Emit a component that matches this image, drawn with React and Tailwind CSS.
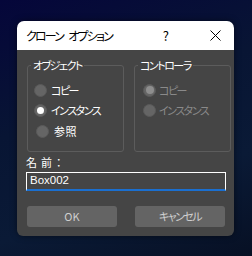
import React from "react";

const font = { fontFamily: '"Noto Sans CJK JP", "Noto Sans", sans-serif' };

function Radio({ label, checked, disabled, className = "", gap = "ml-[4px]", tight = true }) {
  return (
    <div className={"flex h-[20px] items-center " + className}>
      <span className="flex h-[13px] w-[13px] items-center justify-center rounded-full border border-[#5a5a5a] bg-[#656565]">
        {checked && (
          <span
            className={
              "rounded-full " +
              (disabled ? "h-[8px] w-[8px] bg-[#8e8e8e]" : "h-[7px] w-[7px] bg-white")
            }
          />
        )}
      </span>
      <span
        className={
          gap +
          " text-[11px] leading-none " +
          (tight ? "tracking-[-1.5px] " : "tracking-[0.5px] ") +
          (disabled ? "text-[#8a8a8a]" : "text-white")
        }
      >
        {label}
      </span>
    </div>
  );
}

export default function App() {
  return (
    <div
      className="h-[256px] w-[252px] overflow-hidden bg-[linear-gradient(160deg,#05063a_0%,#081534_40%,#0a1a36_70%,#071024_100%)] pl-[17px] pt-[21px] [font-feature-settings:'palt']"
      style={font}
    >
      <div className="flex h-[215px] w-[217px] flex-col rounded-[7px] shadow-[0_0_6px_rgba(0,0,0,0.5)]">
        {/* TITLE BAR */}
        <div className="flex h-[29px] items-center rounded-t-[7px] bg-white pl-[9px] pr-[12px]">
          <span className="text-[12px] tracking-[-1.8px] text-black">クローン</span>
          <span className="ml-[5px] text-[12px] tracking-[-1.8px] text-black">オプション</span>
          <span className="ml-auto mr-[41px] text-[13px] text-black">?</span>
          <svg width="11" height="11" viewBox="0 0 11 11" className="mr-[1px]">
            <path d="M0.5 0.5L10.5 10.5M10.5 0.5L0.5 10.5" stroke="#000" strokeWidth="1" />
          </svg>
        </div>

        {/* BODY */}
        <div className="flex flex-1 flex-col rounded-b-[6px] bg-[#454545] pl-[9px] pt-[8px]">
          <div className="flex gap-[10px] pl-[1px]">
            <fieldset className="h-[94px] w-[97px] rounded-[3px] border border-[#5c5c5c] px-[3px]">
              <legend className="px-[2px] text-[11px] leading-[14px] tracking-[-1.5px] text-white">オブジェクト</legend>
              <div className="flex flex-col pl-[3px] pt-[8px]">
                <Radio label="コピー" />
                <Radio label="インスタンス" checked />
                <Radio label="参照" className="ml-[2px] mt-[1px]" gap="ml-[5px]" tight={false} />
              </div>
            </fieldset>
            <fieldset className="h-[94px] w-[97px] rounded-[3px] border border-[#5c5c5c] px-[3px]">
              <legend className="px-[2px] text-[11px] leading-[14px] tracking-[-1.5px] text-white">コントローラ</legend>
              <div className="flex flex-col pl-[5px] pt-[8px]">
                <Radio label="コピー" checked disabled gap="ml-[3px]" />
                <Radio label="インスタンス" disabled gap="ml-[3px]" />
              </div>
            </fieldset>
          </div>

          <label className="mt-[3px] text-[11px] leading-[14px] tracking-[4px] text-white">名前：</label>
          <div className="mt-[3px] flex h-[19px] w-[200px] items-center border border-b-2 border-white border-b-[#1a6fd0] bg-[#454545] pl-[3px]">
            <span className="text-[11.5px] leading-none text-white" style={{ fontFamily: '"Liberation Sans", Arial, sans-serif' }}>
              Box002
            </span>
          </div>

          <div className="mt-[15px] flex gap-[18px] pl-[1px]">
            <button className="flex h-[21px] w-[90px] items-center justify-center rounded-[3px] bg-[#646464] text-[11px] text-[#cfcfcf]">
              OK
            </button>
            <button className="flex h-[21px] w-[90px] items-center justify-center rounded-[3px] bg-[#646464] text-[11px] tracking-[-1.5px] text-[#cfcfcf]">
              キャンセル
            </button>
          </div>
        </div>
      </div>
    </div>
  );
}
